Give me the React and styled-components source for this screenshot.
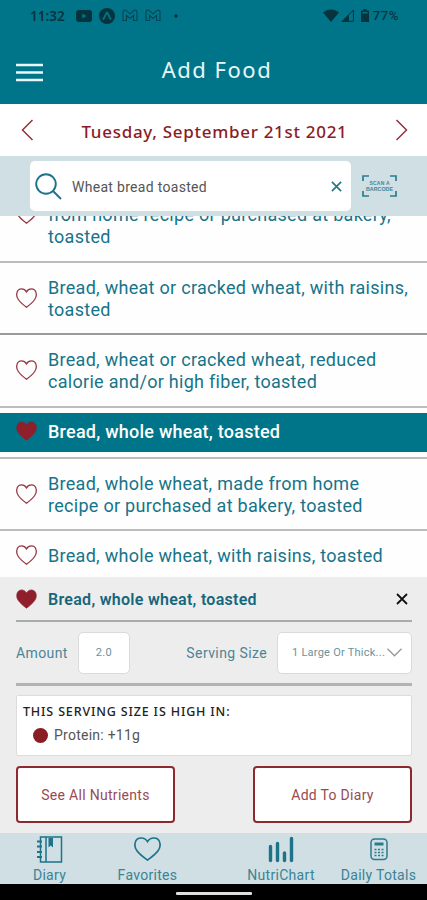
import React, { useState } from 'react'
import styled, { createGlobalStyle } from 'styled-components'

const teal = '#00758a'
const red = '#8b1c24'
const pale = '#cfdfe3'

const GlobalStyle = createGlobalStyle`
    * {
        box-sizing: border-box;
    }
    body {
        margin: 0;
        background-color: #fff;
        font-family: Roboto, sans-serif;
    }
    svg {
        display: block;
        flex: none;
    }
`

const Screen = styled.div`
    display: flex;
    flex-direction: column;
    width: 427px;
    height: 900px;
    overflow: hidden;
`

const Header = styled.div`
    display: flex;
    flex-direction: column;
    height: 104px;
    flex: none;
    background-color: ${teal};
`

const StatusBar = styled.div`
    display: flex;
    align-items: center;
    height: 31px;
    flex: none;
    padding: 0 28px 0 30px;
    color: #06343e;
    font-family: "Noto Sans", sans-serif;
    font-size: 13.5px;
    font-weight: 600;
`

const Clock = styled.div`
    width: 46px;
    letter-spacing: 0;
`

const Battery = styled.div`
    font-family: Roboto, sans-serif;
    font-size: 13px;
    font-weight: 500;
    letter-spacing: 0.6px;
    margin-left: 4px;
`

const Gap = styled.div`
    width: ${props => props.w}px;
    flex: none;
`

const Spacer = styled.div`
    flex: 1;
`

const TitleBar = styled.div`
    display: grid;
    grid-template-columns: 43px 1fr 43px;
    align-items: center;
    height: 73px;
    padding: 10px 9px 0 16px;
`

const Title = styled.div`
    color: #e9f7fa;
    font-family: "Noto Sans", sans-serif;
    font-size: 22px;
    font-weight: 400;
    letter-spacing: 1.5px;
    text-align: center;
    padding-bottom: 7px;
`

const DateBar = styled.div`
    display: flex;
    align-items: center;
    justify-content: space-between;
    height: 52px;
    flex: none;
    padding: 0 19px 0 21px;
`

const DateText = styled.div`
    color: ${red};
    font-family: "Noto Sans", sans-serif;
    font-size: 17px;
    font-weight: 500;
    letter-spacing: 0.7px;
    white-space: nowrap;
    padding-top: 2px;
`

const SearchBar = styled.div`
    display: flex;
    align-items: center;
    height: 60px;
    flex: none;
    padding: 0 30px;
    background-color: ${pale};
`

const SearchBox = styled.div`
    display: flex;
    align-items: center;
    width: 321px;
    height: 50px;
    padding: 0 9px 0 5px;
    border-radius: 5px;
    background-color: #fff;
`

const SearchText = styled.div`
    flex: 1;
    padding-left: 10px;
    padding-top: 1px;
    color: #555;
    font-size: 14px;
    letter-spacing: 0.3px;
`

const Scan = styled.div`
    display: flex;
    margin-left: 11px;
`

const List = styled.div`
    height: 361px;
    flex: none;
    overflow: hidden;
    background-color: #fefefe;
`

const Rows = styled.div`
    margin-top: -47.8px;
`

const Row = styled.div`
    display: flex;
    align-items: center;
    padding: ${props => props.selected ? '5px 0 5px' : '14px 0 12.5px'};
    border-bottom: 2px solid ${props => props.dark ? '#9a9a9a' : '#bdbdbd'};
`

const RowBody = styled.div`
    display: flex;
    align-items: center;
    flex: 1;
    min-height: ${props => props.selected ? '39px' : '0'};
    padding-left: 16px;
    color: ${props => props.selected ? '#fff' : '#16748a'};
    background-color: ${props => props.selected ? teal : 'transparent'};
`

const HeartBox = styled.div`
    padding-bottom: 2px;
`

const FoodName = styled.div`
    margin-left: 11px;
    font-size: 18px;
    line-height: 22px;
    letter-spacing: ${props => props.selected ? '0.24px' : '0.29px'};
    font-weight: ${props => props.selected ? 500 : 400};
    white-space: pre;
`

const Panel = styled.div`
    display: flex;
    flex-direction: column;
    height: 256px;
    flex: none;
    padding: 0 15px 0 16px;
    background-color: #ededed;
`

const PanelHead = styled.div`
    display: flex;
    align-items: center;
    height: 45px;
    padding-right: 4px;
    border-bottom: 2px solid #ababab;
`

const PanelTitle = styled.div`
    flex: 1;
    margin-left: 11px;
    padding-top: 1px;
    color: #17677c;
    font-size: 16px;
    font-weight: 600;
    letter-spacing: 0.28px;
`

const Fields = styled.div`
    display: flex;
    align-items: center;
    height: 64px;
    border-bottom: 3px solid #b3b3b3;
`

const Label = styled.div`
    color: #4b8595;
    font-size: 14px;
    letter-spacing: 0.4px;
    white-space: nowrap;
`

const Field = styled.div`
    display: flex;
    align-items: center;
    justify-content: ${props => props.center ? 'center' : 'space-between'};
    width: ${props => props.w}px;
    height: 42px;
    padding: ${props => props.center ? '0' : '0 9px 0 14px'};
    border: 1px solid #dadada;
    border-radius: 5px;
    background-color: #fff;
    color: #6c929c;
    font-size: 11px;
    letter-spacing: 0.25px;
    white-space: nowrap;
`

const HighIn = styled.div`
    height: 61px;
    flex: none;
    margin-top: 9px;
    padding: 9px 6px;
    border: 1px solid #dcdcdc;
    border-radius: 2px;
    background-color: #fff;
`

const HighTitle = styled.div`
    color: #222;
    font-family: "Noto Sans", sans-serif;
    font-size: 12.5px;
    font-weight: 500;
    line-height: 14px;
    letter-spacing: 0.84px;
`

const Nutrient = styled.div`
    display: flex;
    align-items: center;
    margin-top: 8px;
    padding-left: 10px;
    color: #555;
    font-size: 14px;
    line-height: 16px;
    letter-spacing: 0.25px;
`

const Dot = styled.div`
    width: 15px;
    height: 15px;
    margin-right: 6px;
    border-radius: 50%;
    background-color: ${red};
`

const Buttons = styled.div`
    display: flex;
    justify-content: space-between;
    margin-top: 10px;
`

const Button = styled.button`
    width: 159px;
    height: 57px;
    padding: 0;
    border: 2px solid #8d2a30;
    border-radius: 4px;
    background-color: #fff;
    color: #994a53;
    font-family: Roboto, sans-serif;
    font-size: 14px;
    letter-spacing: 0.3px;
`

const TabBar = styled.div`
    display: flex;
    height: 51px;
    flex: none;
    background-color: ${pale};
`

const Tab = styled.div`
    display: flex;
    flex-direction: column;
    align-items: center;
    width: ${props => props.w}px;
    color: #3c8396;
    font-size: 14px;
    line-height: 16px;
    letter-spacing: 0.3px;
    white-space: nowrap;
`

const TabIcon = styled.div`
    display: flex;
    align-items: center;
    height: 34px;
    padding-bottom: 2px;
`

const NavBar = styled.div`
    display: flex;
    justify-content: center;
    height: 16px;
    flex: none;
    padding-top: 8px;
    background-color: #000;
`

const NavPill = styled.div`
    width: 76px;
    height: 3px;
    border-radius: 1px;
    background-color: #dedede;
`

const Heart = ({ filled, width = 21, height = 20, color = '#963a43', stroke = 1.3 }) => (
    <svg width={width} height={height} viewBox="0 0 21 20" preserveAspectRatio="none">
        <path
            d="M10.5 19.2C7.5 17 4.2 14.3 2.3 11.5C.8 9.3 .4 7 .9 4.9C1.4 2.5 3.3 .9 5.6 .9C7.7 .9 9.4 2 10.5 3.9C11.6 2 13.3 .9 15.4 .9C17.7 .9 19.6 2.5 20.1 4.9C20.6 7 20.2 9.3 18.7 11.5C16.8 14.3 13.5 17 10.5 19.2Z"
            fill={filled ? '#8f1f2b' : 'none'}
            stroke={filled ? '#8f1f2b' : color}
            strokeWidth={filled ? 0.6 : stroke}
        />
    </svg>
)

const Chevron = ({ flip }) => (
    <svg width="13" height="22" viewBox="0 0 13 22" fill="none" stroke="#94323f" strokeWidth="1.5">
        <path d={flip ? 'M1.5 1L11.5 11L1.5 21' : 'M11.5 1L1.5 11L11.5 21'} />
    </svg>
)

const Cross = ({ size, color, width }) => (
    <svg width={size} height={size} viewBox="0 0 12 12" stroke={color} strokeWidth={width}>
        <path d="M1 1L11 11M11 1L1 11" />
    </svg>
)

const Mail = () => (
    <svg width="16" height="13" viewBox="0 0 16 13" fill="none" stroke="#06424f" strokeWidth="1.1">
        <path d="M1 11.5V3C1 1 3 .6 4.2 1.6L8 4.8L11.8 1.6C13 .6 15 1 15 3V11.5H11.5V6.5L8 9.4L4.5 6.5V11.5Z" />
    </svg>
)

const ScanIcon = () => (
    <svg width="35" height="22" viewBox="0 0 35 22">
        <path
            d="M1 6V1H7M28 1H34V6M34 16V21H28M7 21H1V16"
            fill="none"
            stroke="#2a7d8f"
            strokeWidth="1.7"
        />
        <g fill="#3d8798" fontFamily="Liberation Sans, sans-serif" fontSize="5" fontWeight="700" textAnchor="middle">
            <text x="17.5" y="9.5" textLength="20">SCAN A</text>
            <text x="17.5" y="15.5" textLength="27" lengthAdjust="spacingAndGlyphs">BARCODE</text>
        </g>
    </svg>
)

const DiaryIcon = () => (
    <svg width="27" height="27" viewBox="0 0 27 27" fill="none" stroke="#1d7389" strokeWidth="1.5">
        <path d="M4.5 1H25.5V26H4.5ZM10 1V26" />
        <path d="M1 5.5H6M1 10.5H6M1 16H6M1 21H6" strokeWidth="2" />
        <path d="M12.5 2H17V11.5L14.7 9.5L12.5 11.5Z" fill="#1d7389" stroke="none" />
    </svg>
)

const ChartIcon = () => (
    <svg width="26" height="27" viewBox="0 0 26 27" stroke="#1d7389" strokeWidth="3.4" strokeLinecap="round">
        <path d="M2.5 10.5V24.5M9.5 7.5V24.5M16.5 17V24.5M23.5 2.5V24.5" />
    </svg>
)

const CalcIcon = () => (
    <svg width="18" height="23" viewBox="0 0 18 23" fill="none" stroke="#2b7b8f">
        <rect x="1" y="1" width="16" height="20.5" rx="3.5" strokeWidth="1.5" />
        <path d="M4.5 6H13.5" strokeWidth="3" />
        <path d="M4.5 11.5H13.5M4.5 14.5H13.5M4.5 17.5H13.5" strokeWidth="1.5" strokeDasharray="2 1.5" />
    </svg>
)

const foods = [
    { name: '\nfrom home recipe or purchased at bakery,\ntoasted' },
    { name: 'Bread, wheat or cracked wheat, with raisins,\ntoasted', dark: true },
    { name: 'Bread, wheat or cracked wheat, reduced\ncalorie and/or high fiber, toasted' },
    { name: 'Bread, whole wheat, toasted' },
    { name: 'Bread, whole wheat, made from home\nrecipe or purchased at bakery, toasted' },
    { name: 'Bread, whole wheat, with raisins, toasted' },
]

const App = () => {
    const [active, setActive] = useState(3);
    return <>
        <GlobalStyle />
        <Screen>
            <Header>
                <StatusBar>
                    <Clock>11:32</Clock>
                    <svg width="16" height="12" viewBox="0 0 16 12">
                        <rect width="16" height="12" rx="3" fill="#06343e" />
                        <path d="M6.3 3.5L10.5 6L6.3 8.5Z" fill={teal} />
                    </svg>
                    <Gap w={7} />
                    <svg width="16" height="16" viewBox="0 0 16 16">
                        <circle cx="8" cy="8" r="8" fill="#06343e" />
                        <path d="M4 11.5C6 9.5 7 4.5 8 4.5C9 4.5 10 9.5 12 11.5" fill="none" stroke={teal} strokeWidth="1.8" />
                    </svg>
                    <Gap w={7} />
                    <Mail />
                    <Gap w={7} />
                    <Mail />
                    <Gap w={13} />
                    <svg width="4" height="4"><circle cx="2" cy="2" r="1.8" fill="#06343e" /></svg>
                    <Spacer />
                    <svg width="16" height="13" viewBox="0 0 16 13">
                        <path d="M0 3.5C4.5 -.6 11.5 -.6 16 3.5L8 13Z" fill="#06343e" />
                    </svg>
                    <Gap w={2} />
                    <svg width="13" height="13" viewBox="0 0 13 13">
                        <path d="M12.4 1V12.4H1.5Z" fill="none" stroke="#06343e" />
                        <path d="M0 13L8 5V13Z" fill="#06343e" />
                    </svg>
                    <Gap w={7} />
                    <svg width="8" height="13" viewBox="0 0 8 13">
                        <path d="M2.5 0H5.5V1.5H8V13H0V1.5H2.5Z" fill="#06343e" />
                        <path d="M1.5 3H6.5V4.5H1.5Z" fill={teal} />
                    </svg>
                    <Battery>77%</Battery>
                </StatusBar>
                <TitleBar>
                    <svg width="27" height="19" viewBox="0 0 27 19" stroke="#e9f7fa" strokeWidth="2.4">
                        <path d="M0 2H27M0 9.5H27M0 17H27" />
                    </svg>
                    <Title>Add Food</Title>
                </TitleBar>
            </Header>
            <DateBar>
                <Chevron />
                <DateText>Tuesday, September 21st 2021</DateText>
                <Chevron flip />
            </DateBar>
            <SearchBar>
                <SearchBox>
                    <svg width="27" height="27" viewBox="0 0 27 27" fill="none" stroke="#1d7389" strokeWidth="1.9">
                        <circle cx="11" cy="11" r="9.8" />
                        <path d="M18 18L26 26" />
                    </svg>
                    <SearchText>Wheat bread toasted</SearchText>
                    <Cross size={11} color="#26768a" width={1.8} />
                </SearchBox>
                <Scan><ScanIcon /></Scan>
            </SearchBar>
            <List>
                <Rows>
                    {foods.map((food, i) => (
                        <Row key={i} selected={i === active} dark={food.dark} onClick={() => setActive(i)}>
                            <RowBody selected={i === active}>
                                <HeartBox><Heart filled={i === active} /></HeartBox>
                                <FoodName selected={i === active}>{food.name}</FoodName>
                            </RowBody>
                        </Row>
                    ))}
                </Rows>
            </List>
            <Panel>
                <PanelHead>
                    <Heart filled />
                    <PanelTitle>Bread, whole wheat, toasted</PanelTitle>
                    <Cross size={12} color="#111" width={1.8} />
                </PanelHead>
                <Fields>
                    <Label>Amount</Label>
                    <Gap w={10} />
                    <Field w={52} center>2.0</Field>
                    <Spacer />
                    <Label>Serving Size</Label>
                    <Gap w={10} />
                    <Field w={135}>
                        1 Large Or Thick...
                        <svg width="15" height="9" viewBox="0 0 15 9" fill="none" stroke="#999" strokeWidth="1.3">
                            <path d="M.5 .8L7.5 7.8L14.5 .8" />
                        </svg>
                    </Field>
                </Fields>
                <HighIn>
                    <HighTitle>THIS SERVING SIZE IS HIGH IN:</HighTitle>
                    <Nutrient><Dot />Protein: +11g</Nutrient>
                </HighIn>
                <Buttons>
                    <Button>See All Nutrients</Button>
                    <Button>Add To Diary</Button>
                </Buttons>
            </Panel>
            <TabBar>
                <Tab w={99}>
                    <TabIcon><DiaryIcon /></TabIcon>
                    Diary
                </Tab>
                <Tab w={97}>
                    <TabIcon><Heart width={27} height={24} color="#1d7389" /></TabIcon>
                    Favorites
                </Tab>
                <Gap w={36} />
                <Tab w={98}>
                    <TabIcon><ChartIcon /></TabIcon>
                    NutriChart
                </Tab>
                <Tab w={97}>
                    <TabIcon><CalcIcon /></TabIcon>
                    Daily Totals
                </Tab>
            </TabBar>
            <NavBar><NavPill /></NavBar>
        </Screen>
    </>
}

export default App;
